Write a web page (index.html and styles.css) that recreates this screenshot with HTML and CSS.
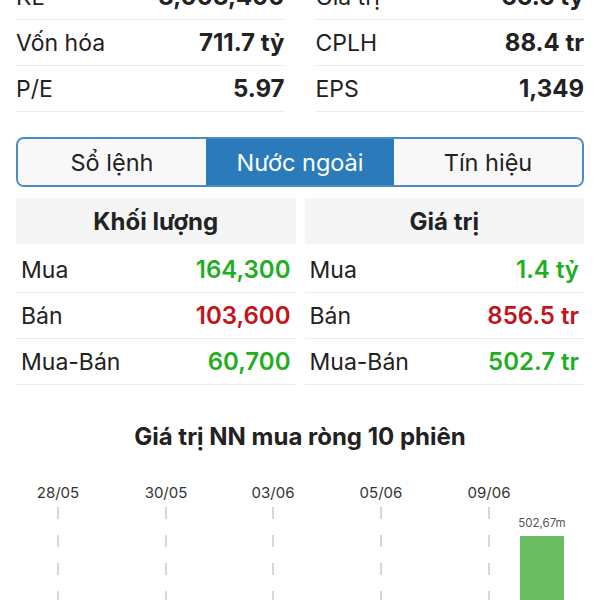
FILE: index.html
```html
<!DOCTYPE html>
<html lang="vi">
<head>
  <meta charset="UTF-8" />
  <meta name="viewport" content="width=device-width, initial-scale=1.0"/>
  <title>Nước ngoài</title>
  <link rel="stylesheet" href="styles.css">
</head>
<body>

<div class="page">
  <div class="stats">
    <div class="stat"><span>KL</span><b>3,003,400</b></div>
    <div class="stat"><span>Giá trị</span><b>66.6 tỷ</b></div>
    <div class="stat"><span>Vốn hóa</span><b>711.7 tỷ</b></div>
    <div class="stat"><span>CPLH</span><b>88.4 tr</b></div>
    <div class="stat"><span>P/E</span><b>5.97</b></div>
    <div class="stat"><span>EPS</span><b>1,349</b></div>
  </div>

  <div class="tabs">
    <div class="tab">Sổ lệnh</div>
    <div class="tab active">Nước ngoài</div>
    <div class="tab">Tín hiệu</div>
  </div>

  <div class="foreign">
    <div class="fcol">
      <div class="fhead">Khối lượng</div>
      <div class="frow"><span>Mua</span><b class="up">164,300</b></div>
      <div class="frow"><span>Bán</span><b class="down">103,600</b></div>
      <div class="frow"><span>Mua-Bán</span><b class="up">60,700</b></div>
    </div>
    <div class="fcol">
      <div class="fhead">Giá trị</div>
      <div class="frow"><span>Mua</span><b class="up">1.4 tỷ</b></div>
      <div class="frow"><span>Bán</span><b class="down">856.5 tr</b></div>
      <div class="frow"><span>Mua-Bán</span><b class="up">502.7 tr</b></div>
    </div>
  </div>
</div>

<div class="chart">
  <div class="chart-title">Giá trị NN mua ròng 10 phiên</div>
  <svg class="chart-svg" width="600" height="140" viewBox="0 0 600 140">
    <g class="grid">
      <line x1="58" y1="47" x2="58" y2="140" />
      <line x1="166" y1="47" x2="166" y2="140" />
      <line x1="273" y1="47" x2="273" y2="140" />
      <line x1="381" y1="47" x2="381" y2="140" />
      <line x1="489" y1="47" x2="489" y2="140" />
    </g>
    <g class="dates">
      <text x="58" y="38">28/05</text>
      <text x="166" y="38">30/05</text>
      <text x="273" y="38">03/06</text>
      <text x="381" y="38">05/06</text>
      <text x="489" y="38">09/06</text>
    </g>
    <rect class="bar" x="520" y="76" width="44" height="64" />
    <text class="bar-label" x="542" y="67">502,67m</text>
  </svg>
</div>

</body>
</html>
```

FILE: styles.css
```css
* {
  margin: 0;
  padding: 0;
  box-sizing: border-box;
}
body {
  font-family: Inter, 'Noto Sans', sans-serif;
  color: #222;
  background: #fff;
  overflow: hidden;
}
.page {
  padding: 0 16px;
}
.stats {
  display: grid;
  grid-template-columns: 1fr 1fr;
  column-gap: 31px;
  margin-top: -26px;
}
.stat {
  display: flex;
  justify-content: space-between;
  align-items: center;
  height: 46px;
  border-bottom: 1px solid #ececec;
  font-size: 23px;
}
.stat b {
  font-size: 24px;
  font-weight: 700;
}
.tabs {
  display: flex;
  margin-top: 25px;
  height: 50px;
  border: 2px solid #4a8cc6;
  border-radius: 8px;
  overflow: hidden;
}
.tab {
  flex: 1;
  display: flex;
  align-items: center;
  justify-content: center;
  background: #f8f8f8;
  font-size: 23.5px;
  color: #222;
}
.tab.active {
  background: #2b7bba;
  color: #fff;
}
.foreign {
  display: grid;
  grid-template-columns: 1fr 1fr;
  column-gap: 9px;
  margin-top: 11px;
}
.fhead {
  height: 46px;
  display: flex;
  align-items: center;
  justify-content: center;
  background: #f5f5f5;
  font-size: 24px;
  font-weight: 700;
  margin-bottom: 3px;
}
.frow {
  height: 46px;
  display: flex;
  justify-content: space-between;
  align-items: center;
  padding: 0 5px;
  border-bottom: 1px solid #ececec;
  font-size: 23px;
}
.frow b {
  font-size: 24px;
  font-weight: 600;
}
.up {
  color: #1fae22;
}
.down {
  color: #c3141b;
}
.chart-title {
  margin-top: 39px;
  text-align: center;
  font-size: 24px;
  font-weight: 700;
  line-height: 26px;
}
.chart-svg {
  display: block;
  margin-top: 10px;
}
.grid line {
  stroke: #bdbdbd;
  stroke-width: 1.2;
  stroke-dasharray: 12 16;
}
.dates text {
  font-family: Inter, 'Noto Sans', sans-serif;
  font-size: 15px;
  fill: #333;
  text-anchor: middle;
}
.bar {
  fill: #6bbd62;
}
.bar-label {
  font-family: Inter, 'Noto Sans', sans-serif;
  font-size: 11.5px;
  fill: #555;
  text-anchor: middle;
}
```
